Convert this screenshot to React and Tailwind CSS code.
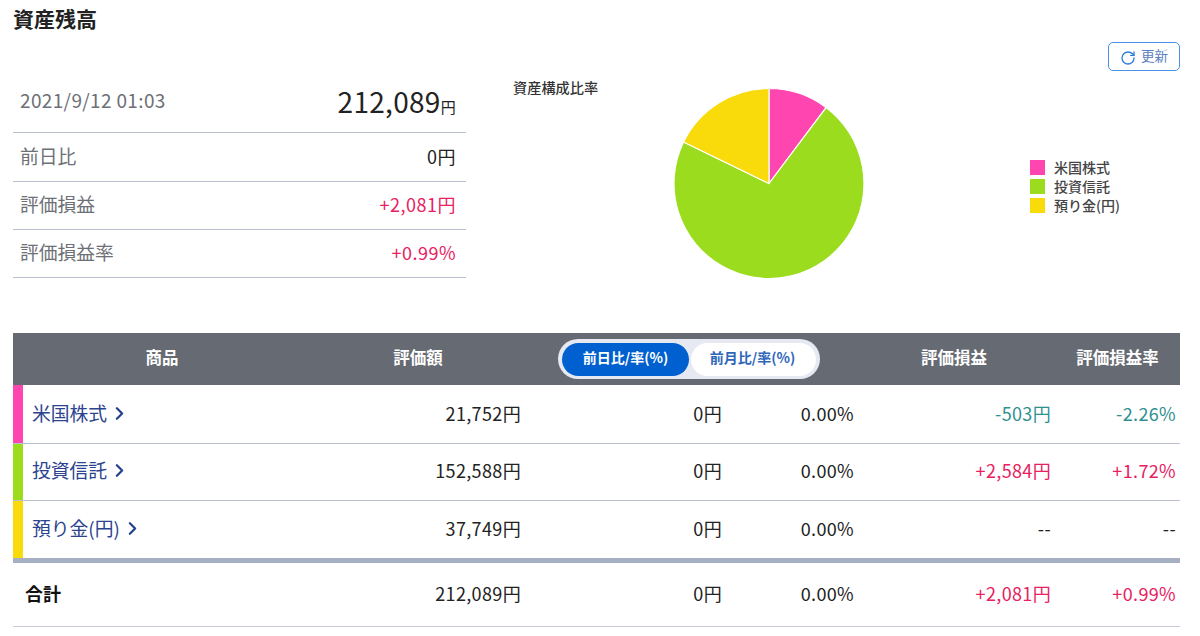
import React from 'react';
import { RotateCw, ChevronRight } from 'lucide-react';

const assets = [
  { name: '米国株式', value: 21752, bar: 'bg-[#ff45b0]', color: '#ff45b0', pl: '-503円', rate: '-2.26%', tone: 'text-[#2f9090]', height: 'h-[59px] border-b border-[#b9bfcc]', pad: 'pb-[1px]' },
  { name: '投資信託', value: 152588, bar: 'bg-[#9cdc1f]', color: '#9cdc1f', pl: '+2,584円', rate: '+1.72%', tone: 'text-[#e8215f]', height: 'h-[57px] border-b border-[#b9bfcc]', pad: 'pb-[3px]' },
  { name: '預り金(円)', value: 37749, bar: 'bg-[#f9da0a]', color: '#f9da0a', pl: '--', rate: '--', tone: 'text-[#222222]', height: 'h-[57px]', pad: 'pb-[3px]' },
];

const rowGrid = 'grid grid-cols-[10px_298px_200px_201px_132px_197px_125px] items-center';

const PieChart = () => {
  const total = assets.reduce((sum, a) => sum + a.value, 0);
  const r = 95;
  let angle = 0;

  const slices = assets.map((a) => {
    const start = angle;
    angle += (a.value / total) * Math.PI * 2;
    const x1 = 96 + r * Math.sin(start);
    const y1 = 96.5 - r * Math.cos(start);
    const x2 = 96 + r * Math.sin(angle);
    const y2 = 96.5 - r * Math.cos(angle);
    const large = angle - start > Math.PI ? 1 : 0;
    return { color: a.color, d: `M96 96.5 L${x1} ${y1} A${r} ${r} 0 ${large} 1 ${x2} ${y2} Z` };
  });

  return (
    <svg width="192" height="193" viewBox="0 0 192 193">
      {slices.map((s) => (
        <path key={s.color} d={s.d} fill={s.color} stroke="#ffffff" strokeWidth="1.2" />
      ))}
    </svg>
  );
};

const SummaryRow = ({ label, value, tone, height }) => (
  <div className={`flex items-center justify-between border-b border-[#b9bfcc] pb-[2px] pl-[7px] pr-[10px] ${height}`}>
    <span className="text-[18.8px] text-[#6d7076]">{label}</span>
    <span className={`text-[18px] tracking-[0.5px] ${tone}`}>{value}</span>
  </div>
);

const App = () => {
  return (
    <div className="h-[636px] w-[1200px] overflow-hidden bg-white pl-[13px] pr-5 font-['Noto_Sans_CJK_JP','Noto_Sans',sans-serif] text-[#222222]">
      <h1 className="h-[42px] pt-[3px] text-[21px] font-bold leading-[30px]">資産残高</h1>

      {/* Summary and chart */}
      <div className="flex h-[291px]">
        <div className="w-[453px] pt-[30px]">
          <div className="flex h-[61px] items-center justify-between border-b border-[#b9bfcc] pb-[3px] pl-[7px] pr-[10px]">
            <span className="text-[19px] tracking-[0.35px] text-[#6d7076]">2021/9/12 01:03</span>
            <span className="text-[28px] leading-none tracking-[0.3px]">
              212,089<span className="text-[15px]">円</span>
            </span>
          </div>
          <SummaryRow label="前日比" value="0円" tone="text-[#222222]" height="h-[49px]" />
          <SummaryRow label="評価損益" value="+2,081円" tone="text-[#e8215f]" height="h-12" />
          <SummaryRow label="評価損益率" value="+0.99%" tone="text-[#e8215f]" height="h-12" />
        </div>

        <div className="ml-[47px] w-[85px] pt-[36px] text-[14.2px] font-medium leading-[18px] whitespace-nowrap text-[#333333]">
          資産構成比率
        </div>

        <div className="ml-[75px] pt-[45px]">
          <PieChart />
        </div>

        <div className="ml-[165px] flex w-[150px] flex-col">
          <button className="ml-[78px] flex h-[29px] w-[72px] items-center justify-center gap-[5px] rounded-[5px] border border-[#4a90e2] text-[13.5px] text-[#5a80c0]">
            <RotateCw size={16} strokeWidth={2} className="mt-[2px] text-[#2f7fd8]" />
            <span className="mb-[3px]">更新</span>
          </button>
          <div className="mt-[89px] flex flex-col gap-[4px]">
            {assets.map((a) => (
              <div key={a.name} className="flex h-[15px] items-center gap-[9px] text-[14px] font-medium text-[#444444]">
                <span className={`h-[15px] w-[15px] ${a.bar}`} />
                {a.name}
              </div>
            ))}
          </div>
        </div>
      </div>

      {/* Table */}
      <div className="w-[1167px]">
        <div className="flex h-[52px] items-center bg-[#666a72] text-[16.5px] font-bold text-white">
          <div className="w-[298px] pb-[3px] text-center">商品</div>
          <div className="w-[214px] pb-[3px] text-center">評価額</div>
          <div className="flex w-[328px] justify-center">
            <div className="flex h-[40px] w-[262px] items-center gap-[2px] rounded-full bg-[#e6e9f2] px-[4px] text-[14px]">
              <span className="flex h-[33px] w-[127px] items-center justify-center rounded-full bg-[#0060cf] pb-[3px]">前日比/率(%)</span>
              <span className="flex h-[33px] w-[125px] items-center justify-center rounded-full bg-white pb-[3px] pr-[2px] text-[#2f66b8]">前月比/率(%)</span>
            </div>
          </div>
          <div className="w-[202px] pb-[3px] text-center">評価損益</div>
          <div className="w-[125px] pb-[3px] text-center">評価損益率</div>
        </div>

        {assets.map((a) => (
          <div key={a.name} className={`${rowGrid} ${a.height} text-[18px] tracking-[0.35px]`}>
            <span className={`h-full ${a.bar}`} />
            <span className={`flex items-center gap-[2px] pl-[9px] text-[18.8px] tracking-normal text-[#2c4390] ${a.pad}`}>
              {a.name}
              <ChevronRight size={21} strokeWidth={2.6} className="text-[#24408f]" />
            </span>
            <span className={`text-right ${a.pad}`}>{a.value.toLocaleString()}円</span>
            <span className={`text-right ${a.pad}`}>0円</span>
            <span className={`text-right ${a.pad}`}>0.00%</span>
            <span className={`text-right ${a.pad} ${a.tone}`}>{a.pl}</span>
            <span className={`text-right ${a.pad} ${a.tone}`}>{a.rate}</span>
          </div>
        ))}

        <div className={`${rowGrid} h-[69px] border-t-[5px] border-b border-t-[#a7afc2] border-b-[#c5cad6] pb-[3px] text-[18px] tracking-[0.35px]`}>
          <span />
          <span className="pl-[2px] text-[18px] font-bold tracking-normal text-[#111111]">合計</span>
          <span className="text-right">212,089円</span>
          <span className="text-right">0円</span>
          <span className="text-right">0.00%</span>
          <span className="text-right text-[#e8215f]">+2,081円</span>
          <span className="text-right text-[#e8215f]">+0.99%</span>
        </div>
      </div>
    </div>
  );
};

export default App;
